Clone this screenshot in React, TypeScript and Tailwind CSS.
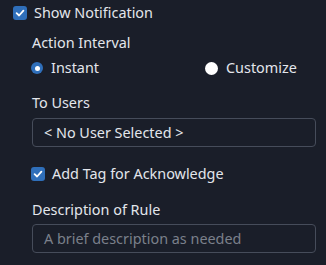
import React from "react";

function Check() {
  return (
    <span className="flex h-[14px] w-[14px] shrink-0 items-center justify-center rounded-[3px] bg-[#2f6fba]">
      <svg width="10" height="10" viewBox="0 0 10 10" fill="none">
        <path d="M1.6 5.2 L4.1 7.5 L8.4 2.7" stroke="white" strokeWidth="1.8" strokeLinecap="round" strokeLinejoin="round" />
      </svg>
    </span>
  );
}

function Radio({ on }: { on: boolean }) {
  return on ? (
    <span className="flex h-[12px] w-[12px] shrink-0 items-center justify-center rounded-full bg-[#2f6fba]">
      <span className="h-[5px] w-[5px] rounded-full bg-white" />
    </span>
  ) : (
    <span className="h-[13px] w-[13px] shrink-0 rounded-full bg-white" />
  );
}

export default function App() {
  return (
    <div className="h-[265px] w-[326px] overflow-hidden bg-[#1a1e29] pt-[3px] font-['Noto_Sans',sans-serif] text-[14.4px] leading-[20px] text-[#e3e6ec]">
      <div className="flex h-[20px] items-center gap-[7px] pl-[13px]">
        <Check />
        <span>Show Notification</span>
      </div>
      <div className="pl-[32px]">
        <div className="mt-[10px] h-[20px]">Action Interval</div>
        <div className="mt-[5px] flex h-[20px] items-center">
          <div className="flex w-[174px] items-center gap-[8px] -ml-[1px]">
            <Radio on />
            <span>Instant</span>
          </div>
          <div className="flex items-center gap-[8px]">
            <Radio on={false} />
            <span>Customize</span>
          </div>
        </div>
        <div className="mt-[15px] h-[20px]">To Users</div>
        <div className="mt-[5px] flex h-[29px] w-[284px] items-center rounded-[4px] border border-[#464c5a] pl-[11px]">
          &lt; No User Selected &gt;
        </div>
        <div className="mt-[17px] flex h-[20px] items-center gap-[7px] -ml-[1px]">
          <Check />
          <span>Add Tag for Acknowledge</span>
        </div>
        <div className="mt-[16px] h-[20px]">Description of Rule</div>
        <div className="mt-[4px] flex h-[29px] w-[284px] items-center rounded-[4px] border border-[#464c5a] pl-[11px] text-[#7b808b]">
          A brief description as needed
        </div>
      </div>
    </div>
  );
}
